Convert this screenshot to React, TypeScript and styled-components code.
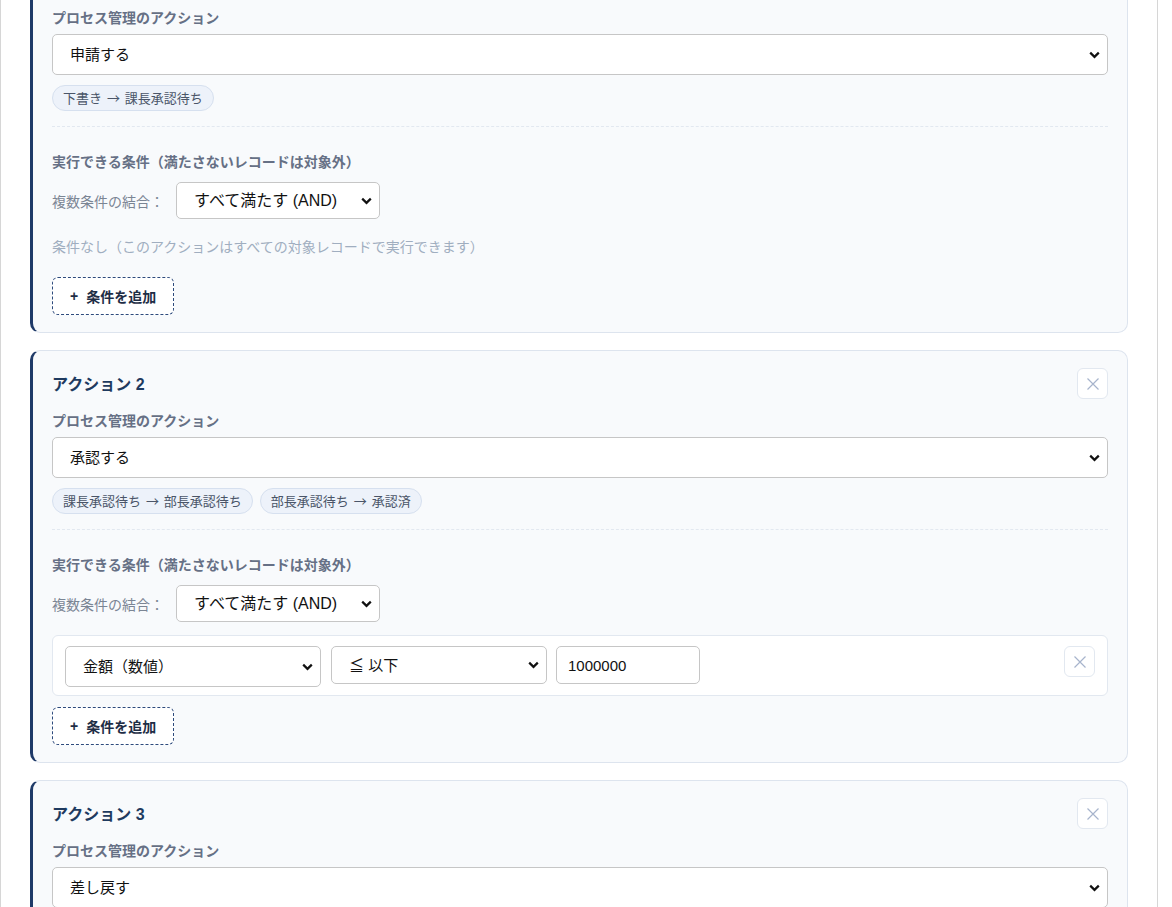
import React, { useLayoutEffect, useRef } from 'react';
import styled, { createGlobalStyle } from 'styled-components';

const GlobalStyle = createGlobalStyle`
  html, body {
    margin: 0;
    padding: 0;
    background: #fff;
  }
  body {
    font-family: 'Liberation Sans', 'Noto Sans CJK JP', sans-serif;
    color: #111;
  }
  * {
    box-sizing: border-box;
  }
`;

const Panel = styled.div`
  width: 1158px;
  height: 100vh;
  overflow-y: auto;
  scrollbar-width: none;
  border-left: 1px solid #d6d6d6;
  border-right: 1px solid #d6d6d6;
  padding: 20px 29px;
  display: flex;
  flex-direction: column;
  gap: 17px;
  &::-webkit-scrollbar {
    display: none;
  }
`;

const Card = styled.section`
  flex: none;
  background: #f8fafc;
  border: 1px solid #dde4ee;
  border-left: 3px solid #1f3a68;
  border-radius: 10px;
  padding: 17px 19px 17px 19px;
`;

const CardHeader = styled.div`
  display: flex;
  align-items: center;
  justify-content: space-between;
  height: 31px;
`;

const Title = styled.h3`
  margin: 0 0 2px;
  font-size: 16px;
  font-weight: 700;
  color: #1e3a5f;
`;

const CloseButton = styled.button`
  flex: none;
  width: 31px;
  height: 31px;
  padding: 0;
  display: flex;
  align-items: center;
  justify-content: center;
  background: #fff;
  border: 1px solid #e2e8f0;
  border-radius: 6px;
  cursor: pointer;
  margin-left: auto;
`;

const FieldLabel = styled.div<{ $top?: number }>`
  margin-top: ${({ $top }) => $top ?? 12}px;
  margin-bottom: 6px;
  font-size: 14px;
  line-height: 20px;
  font-weight: 600;
  color: #667085;
`;

const SelectWrap = styled.div<{ $width?: number; $height: number }>`
  position: relative;
  flex: none;
  width: ${({ $width }) => ($width ? `${$width}px` : '100%')};
  height: ${({ $height }) => $height}px;
  svg {
    position: absolute;
    right: 8px;
    top: 50%;
    margin-top: -4px;
    pointer-events: none;
  }
`;

const Select = styled.select<{ $size?: number }>`
  appearance: none;
  width: 100%;
  height: 100%;
  padding: 0 28px 0 17px;
  font-family: inherit;
  font-size: ${({ $size }) => $size ?? 15}px;
  color: #111;
  background: #fff;
  border: 1px solid #c6c6c6;
  border-radius: 5px;
  outline: none;
`;

const TextInput = styled.input`
  flex: none;
  width: 144px;
  height: 38px;
  margin-left: -1px;
  padding: 0 11px;
  font-family: inherit;
  font-size: 15px;
  color: #111;
  background: #fff;
  border: 1px solid #c6c6c6;
  border-radius: 5px;
  outline: none;
`;

const ChipRow = styled.div`
  display: flex;
  gap: 7px;
  margin-top: 10px;
`;

const Chip = styled.span`
  height: 26px;
  line-height: 24px;
  padding: 0 10px;
  font-family: 'Noto Sans CJK JP', sans-serif;
  font-size: 13px;
  word-spacing: 2px;
  color: #4a5568;
  background: #edf2fa;
  border: 1px solid #d6e0ef;
  border-radius: 13px;
`;

const Divider = styled.hr`
  margin: 15px 0 0;
  border: 0;
  border-top: 1px dashed #e2e8f0;
`;

const CombineRow = styled.div`
  display: flex;
  align-items: center;
  gap: 12px;
  margin-top: 10px;
`;

const CombineLabel = styled.span`
  font-size: 14px;
  color: #7b8594;
`;

const ConditionList = styled.div`
  margin-top: 13px;
  display: flex;
  flex-direction: column;
  gap: 8px;
`;

const ConditionBox = styled.div`
  display: flex;
  align-items: flex-start;
  gap: 10px;
  padding: 10px 12px 8px 12px;
  background: #fff;
  border: 1px solid #e2e8f0;
  border-radius: 6px;
`;

const EmptyNote = styled.div`
  margin-top: 12px;
  padding: 6px 0 9px;
  font-size: 14px;
  line-height: 20px;
  color: #a0aec0;
`;

const AddButton = styled.button`
  display: flex;
  align-items: center;
  gap: 8px;
  margin-top: 11px;
  height: 38px;
  padding: 0 17px;
  font-family: inherit;
  font-size: 14px;
  font-weight: 700;
  color: #1e2d45;
  background: #fff;
  border: 1px dashed #2d4a7c;
  border-radius: 6px;
  cursor: pointer;
`;

const Chevron = () => (
  <svg width="11" height="8" viewBox="0 0 11 8">
    <path d="M1.2 1.6 L5.5 5.9 L9.8 1.6" fill="none" stroke="#111" strokeWidth="2.2" />
  </svg>
);

const XIcon = () => (
  <svg width="14" height="14" viewBox="0 0 14 14">
    <path d="M1.5 1.5 L12.5 12.5 M12.5 1.5 L1.5 12.5" stroke="#a7b4cc" strokeWidth="1.2" />
  </svg>
);

type Condition = { field: string; op: string; value: string; fieldW: number; opW: number; fieldH: number; opH: number };
type Action = { id: number; action: string; transitions: string[]; conditions: Condition[] };

const actions: Action[] = [
  { id: 1, action: '申請する', transitions: ['下書き → 課長承認待ち'], conditions: [] },
  {
    id: 2,
    action: '承認する',
    transitions: ['課長承認待ち → 部長承認待ち', '部長承認待ち → 承認済'],
    conditions: [{ field: '金額（数値）', op: '≦ 以下', value: '1000000', fieldW: 256, opW: 216, fieldH: 41, opH: 38 }],
  },
  { id: 3, action: '差し戻す', transitions: ['課長承認待ち → 下書き', '部長承認待ち → 下書き'], conditions: [] },
];

const ActionCard: React.FC<{ item: Action }> = ({ item }) => (
  <Card>
    <CardHeader>
      <Title>アクション {item.id}</Title>
      <CloseButton aria-label="削除">
        <XIcon />
      </CloseButton>
    </CardHeader>
    <FieldLabel>プロセス管理のアクション</FieldLabel>
    <SelectWrap $height={41}>
      <Select defaultValue={item.action}>
        <option>申請する</option>
        <option>承認する</option>
        <option>差し戻す</option>
      </Select>
      <Chevron />
    </SelectWrap>
    <ChipRow>
      {item.transitions.map((t) => (
        <Chip key={t}>{t}</Chip>
      ))}
    </ChipRow>
    <Divider />
    <FieldLabel $top={25}>実行できる条件（満たさないレコードは対象外）</FieldLabel>
    <CombineRow>
      <CombineLabel>複数条件の結合：</CombineLabel>
      <SelectWrap $width={204} $height={37}>
        <Select defaultValue="and" $size={16}>
          <option value="and">すべて満たす (AND)</option>
          <option value="or">いずれか満たす (OR)</option>
        </Select>
        <Chevron />
      </SelectWrap>
    </CombineRow>
    {item.conditions.length === 0 ? (
      <EmptyNote>条件なし（このアクションはすべての対象レコードで実行できます）</EmptyNote>
    ) : (
      <ConditionList>
        {item.conditions.map((c, i) => (
          <ConditionBox key={i}>
            <SelectWrap $width={c.fieldW} $height={c.fieldH}>
              <Select defaultValue={c.field}>
                <option>{c.field}</option>
              </Select>
              <Chevron />
            </SelectWrap>
            <SelectWrap $width={c.opW} $height={c.opH}>
              <Select defaultValue={c.op}>
                <option>{c.op}</option>
              </Select>
              <Chevron />
            </SelectWrap>
            <TextInput defaultValue={c.value} />
            <CloseButton aria-label="条件を削除">
              <XIcon />
            </CloseButton>
          </ConditionBox>
        ))}
      </ConditionList>
    )}
    <AddButton>
      <span>+</span>
      <span>条件を追加</span>
    </AddButton>
  </Card>
);

export default function App() {
  const ref = useRef<HTMLDivElement>(null);
  useLayoutEffect(() => {
    if (ref.current) ref.current.scrollTop = 73;
  }, []);
  return (
    <>
      <GlobalStyle />
      <Panel ref={ref}>
        {actions.map((a) => (
          <ActionCard key={a.id} item={a} />
        ))}
      </Panel>
    </>
  );
}
